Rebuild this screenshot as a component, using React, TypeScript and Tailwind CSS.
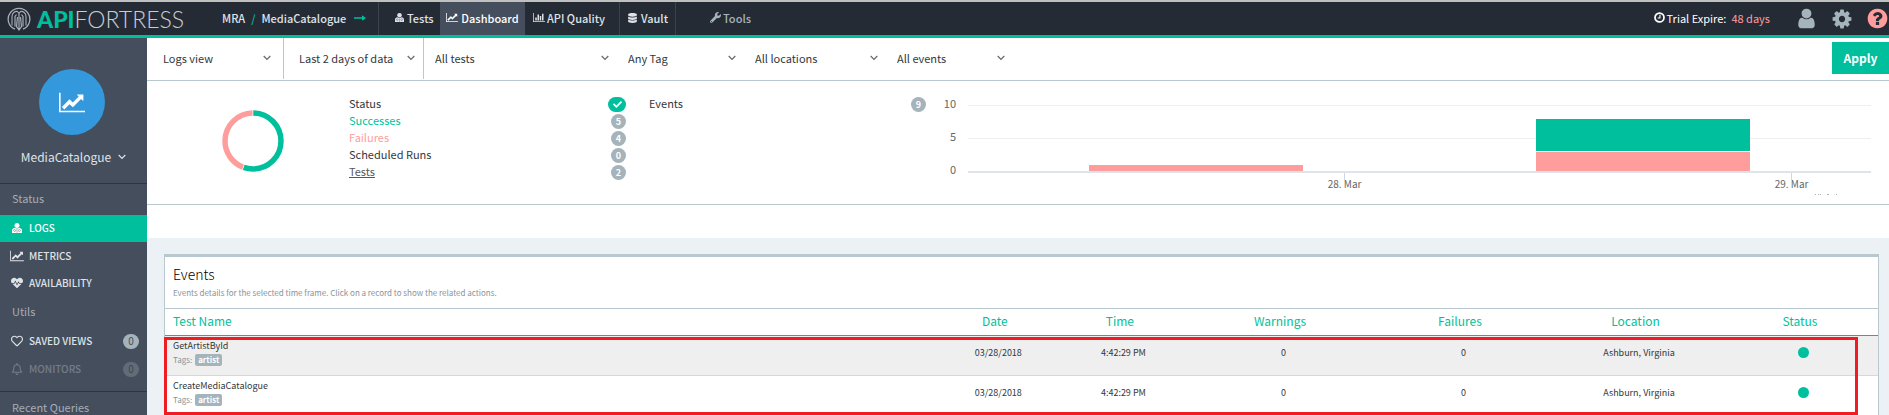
import React from "react";
import { FaWrench, FaDatabase, FaHeartbeat, FaRegHeart, FaRegBell, FaCheck } from "react-icons/fa";

type IconProps = { className?: string };

const LineChart = ({ className }: IconProps) => (
  <svg viewBox="0 0 2048 1792" fill="currentColor" className={className} aria-hidden="true">
    <path d="M2048 1536v128h-2048v-1536h128v1408h1920zM1920 288v435q0 21-19.5 29.5t-35.5-7.5l-121-121-633 633q-10 10-23 10t-23-10l-233-233-416 416-192-192 585-585q10-10 23-10t23 10l233 233 464-464-121-121q-16-16-7.5-35.5t29.5-19.5h435q14 0 23 9t9 23z" />
  </svg>
);

const BarChart = ({ className }: IconProps) => (
  <svg viewBox="0 0 2048 1792" fill="currentColor" className={className} aria-hidden="true">
    <path d="M640 896v512h-256v-512h256zM1024 384v1024h-256v-1024h256zM2048 1536v128h-2048v-1536h128v1408h1920zM1408 640v768h-256v-768h256zM1792 256v1152h-256v-1152h256z" />
  </svg>
);

const ChevronDown = ({ className }: IconProps) => (
  <svg viewBox="0 0 8 6" fill="none" stroke="currentColor" strokeWidth="1.200" className={className} aria-hidden="true">
    <path d="M0.700 1l3.300 3.300L7.300 1" />
  </svg>
);

const Tester = ({ className }: IconProps) => (
  <svg viewBox="0 0 20 20" className={className} aria-hidden="true">
    <g fill="currentColor">
      <path d="M10 0c3.200 0 5 2 5 5 0 2.800-2 5-5 5S5 7.800 5 5c0-3 1.800-5 5-5z" />
      <path d="M5.500 9.500c2.500 2 6.500 2 9 0 3.500.8 5.500 2.500 5.500 5.500v5H0v-5c0-3 2-4.700 5.500-5.500z" />
    </g>
    <g className="fill-none stroke-[#252b35]/50" strokeWidth="1.400">
      <circle cx="5.200" cy="15" r="2" />
      <circle cx="14.800" cy="15" r="2" />
      <path d="M10 12v7.500" />
    </g>
  </svg>
);

const Gear = ({ className }: IconProps) => (
  <svg viewBox="0 0 1792 1792" fill="currentColor" className={className} aria-hidden="true">
    <path d="M1152 896q0-106-75-181t-181-75-181 75-75 181 75 181 181 75 181-75 75-181zm512-109v222q0 12-8 23t-20 13l-185 28q-19 54-39 91 35 50 107 138 10 12 10 25t-9 23q-27 37-99 108t-94 71q-12 0-26-9l-138-108q-44 23-91 38-16 136-29 186-7 28-36 28h-222q-14 0-24.5-8.5t-11.500-21.500l-28-184q-49-16-90-37l-141 107q-10 9-25 9-14 0-25-11-126-114-165-168-7-10-7-23 0-12 8-23 15-21 51-66.500t54-70.500q-27-50-41-99l-183-27q-13-2-21-12.500t-8-23.500v-222q0-12 8-23t19-13l186-28q14-46 39-92-40-57-107-138-10-12-10-24 0-10 9-23 26-36 98.500-107.500t94.500-71.500q13 0 26 10l138 107q44-23 91-38 16-136 29-186 7-28 36-28h222q14 0 24.500 8.500t11.500 21.500l28 184q49 16 90 37l142-107q9-9 24-9 13 0 25 10 129 119 165 170 7 8 7 22 0 12-8 23-15 21-51 66.500t-54 70.500q26 50 41 98l183 28q13 2 21 12.500t8 23.500z" />
  </svg>
);

const User = ({ className }: IconProps) => (
  <svg viewBox="0 0 1792 1792" fill="currentColor" className={className} aria-hidden="true">
    <path d="M1536 1399q0 109-62.500 187t-150.500 78h-854q-88 0-150.500-78t-62.500-187q0-85 8.500-160.500t31.500-152 58.500-131 94-89 134.500-34.500q131 128 313 128t313-128q76 0 134.500 34.500t94 89 58.500 131 31.500 152 8.500 160.500zm-256-887q0 159-112.500 271.500t-271.500 112.500-271.500-112.500-112.500-271.500 112.500-271.500 271.500-112.500 271.500 112.500 112.500 271.500z" />
  </svg>
);

const Question = ({ className }: IconProps) => (
  <svg viewBox="0 0 1792 1792" fill="currentColor" className={className} aria-hidden="true">
    <path d="M1024 1376v-192q0-14-9-23t-23-9h-192q-14 0-23 9t-9 23v192q0 14 9 23t23 9h192q14 0 23-9t9-23zm256-672q0-88-55.500-163t-138.500-116-170-41q-243 0-371 213-15 24 8 42l132 100q7 6 19 6 16 0 25-12 53-68 86-92 34-24 86-24 48 0 85.500 26t37.500 59q0 38-20 61t-68 45q-63 28-115.500 86.500t-52.500 125.500v36q0 14 9 23t23 9h192q14 0 23-9t9-23q0-19 21.500-49.500t54.500-49.500q32-18 49-28.500t46-35 44.500-48 28-60.500 12.500-81zm384 192q0 209-103 385.500t-279.500 279.500-385.500 103-385.500-103-279.500-279.500-103-385.500 103-385.500 279.500-279.500 385.500-103 385.500 103 279.500 279.500 103 385.500z" />
  </svg>
);

const Clock = ({ className }: IconProps) => (
  <svg viewBox="0 0 12 12" className={className} fill="none" stroke="currentColor" aria-hidden="true">
    <circle cx="6" cy="6" r="4.900" strokeWidth="1.900" />
    <path d="M6.500 3v3.500H4" strokeWidth="1.200" />
  </svg>
);

const LogoMark = ({ className }: IconProps) => (
  <svg viewBox="0 0 24 24" className={className} fill="none" stroke="#a9adb8" aria-hidden="true">
    <path d="M8 22.200A10.800 10.800 0 1 1 16 22.200" strokeWidth="1.300" />
    <path d="M5 18.500V9.500C5 6 8 4 10.500 4.500l1.500 2 1.500-2C16 4 19 6 19 9.500v9" strokeWidth="1.100" />
    <path d="M8 19.500V9.500l1.500-2M16 19.500V9.500l-1.500-2M10.500 10l-1 9.500 2.500 3.500 2.500-3.500-1-9.500M12 7v15" strokeWidth="1.200" />
  </svg>
);

const views: [string, string, string, string][] = [
  ["Logs view", "w-[137px] pl-4 pr-[12px] border-r", "view", "Choose view"],
  ["Last 2 days of data", "w-[140px] pl-[15px] pr-[8px] border-r", "range", "Time range"],
  ["All tests", "w-[193px] pl-[11px] pr-[8px]", "tests", "Tests"],
  ["Any Tag", "w-[127px] pl-[11px] pr-[8px]", "tag", "Tag"],
  ["All locations", "w-[142px] pl-[11px] pr-[8px]", "location", "Location"],
  ["All events", "w-[127px] pl-[11px] pr-[8px]", "events", "Events"],
];

const stats: [string, string, string][] = [
  ["Successes", "5", "text-[#00bf9c]"],
  ["Failures", "4", "text-[#ff9d9d]"],
  ["Scheduled Runs", "0", "text-[#33373d]"],
  ["Tests", "2", "text-[#55585c] underline"],
];

const Count = ({ children }: { children: React.ReactNode }) => (
  <span className="flex h-[15px] w-[15px] items-center justify-center rounded-full bg-[#a5b3bb] text-[9px] font-bold text-white">{children}</span>
);

const rows = ["GetArtistById", "CreateMediaCatalogue"];

const navText = "pb-[2px]";
const sideLink = "flex items-center gap-[5px] pl-[10px] pr-2 text-[10px] font-medium";

export default function App() {
  return (
    <div className="min-h-screen overflow-hidden bg-[#ecf1f5] font-['Noto_Sans_CJK_SC','Noto_Sans',sans-serif] text-[11px] leading-[16px] text-[#33373d]">
      <header className="flex h-[38px] items-center border-t-2 border-b-3 border-t-[#c0c0c0] border-b-[#00bf9c] bg-[#252b35] font-medium text-[#dfe3e8]">
        <a href="#home" className="ml-[7px] flex w-[215px] items-center gap-[6px]" aria-label="API Fortress">
          <LogoMark className="h-6 w-6" />
          <span className="font-['Lato',sans-serif] text-[23px] leading-[24px] text-[#c9cdd6]">
            <b className="font-black text-[#00bf9c]">API</b>
            <span className="font-light">FORTRESS</span>
          </span>
        </a>
        <a href="#project" className={`flex w-[156px] items-center gap-[6px] ${navText}`}>
          <span>MRA</span>
          <span className="text-[#00bf9c]">/</span>
          <span>MediaCatalogue</span>
          <svg viewBox="0 0 12 6" className="ml-[2px] h-[6px] w-3 shrink-0" fill="#00bf9c" aria-hidden="true">
            <path d="M0 2.300h8V.3L12 3 8 5.700v-2H0z" />
          </svg>
        </a>
        <nav className="flex h-full flex-1 items-stretch">
          <a href="#tests" className={`flex w-[62px] items-center gap-[3px] border-l border-[#3d434d] pl-4 ${navText}`}><Tester className="h-[9px] w-[9px]" />Tests</a>
          <a href="#dashboard" className={`flex w-[85px] items-center justify-center gap-[3px] bg-[#454e5d] text-white ${navText}`}><LineChart className="h-[11px] w-3" />Dashboard</a>
          <a href="#quality" className={`flex w-[95px] items-center gap-[2px] border-r border-[#3d434d] pl-2 ${navText}`}><BarChart className="h-[11px] w-3" />API Quality</a>
          <a href="#vault" className={`flex w-14 items-center gap-[4px] border-r border-[#3d434d] pl-2 ${navText}`}><FaDatabase className="h-[10px] w-[9px]" />Vault</a>
          <a href="#tools" className={`ml-[34px] flex items-center gap-[2px] text-[#a5b3bb] ${navText}`}><FaWrench className="h-[11px] w-[11px]" />Tools</a>
        </nav>
        <div className={`flex items-center gap-[2px] font-normal text-white ${navText}`}>
          <Clock className="h-[11px] w-[11px]" />Trial Expire:<span className="ml-[3px] text-[#ff9d9d]">48 days</span>
        </div>
        <button className="ml-[25px] text-[#a5b3bb]" aria-label="Account"><User className="h-[23px] w-[23px]" /></button>
        <button className="ml-[13px] text-[#a5b3bb]" aria-label="Settings"><Gear className="h-[22px] w-[22px]" /></button>
        <button className="ml-[13px] text-[#ff9d9d]" aria-label="Help"><Question className="h-[23px] w-[23px]" /></button>
      </header>

      <div className="flex items-stretch">
        <aside className="w-[147px] shrink-0 bg-[#454e5d] text-[#dfe3e8]">
          <div className="flex flex-col items-center border-b border-[#2e3542] pt-[31px] pb-[18px]">
            <span className="mr-[3px] flex h-[66px] w-[66px] items-center justify-center rounded-full bg-[#3398dc] text-white"><LineChart className="h-[23px] w-[26px]" /></span>
            <button className="mt-[14px] flex items-center gap-[7px] text-[12px] leading-[16px]">MediaCatalogue<ChevronDown className="h-[6px] w-2" /></button>
          </div>
          <h2 className="flex h-[31px] items-center pb-[3px] pl-3 text-[#a5adb8]">Status</h2>
          <nav>
            <a href="#logs" className={`${sideLink} h-[27px] bg-[#00bf9c] pb-px text-white`}><span className="flex w-[14px] justify-center"><Tester className="h-[10px] w-[10px]" /></span>LOGS</a>
            <a href="#metrics" className={`${sideLink} h-[27px]`}><span className="flex w-[14px] justify-center"><LineChart className="h-3 w-[14px]" /></span>METRICS</a>
            <a href="#availability" className={`${sideLink} h-[27px]`}><span className="flex w-[14px] justify-center"><FaHeartbeat className="h-3 w-3" /></span>AVAILABILITY</a>
          </nav>
          <h2 className="flex h-[31px] items-center pb-[2px] pl-3 text-[#a5adb8]">Utils</h2>
          <nav>
            <a href="#views" className={`${sideLink} h-7`}><span className="flex w-[14px] justify-center"><FaRegHeart className="h-3 w-3" /></span><span className="flex-1">SAVED VIEWS</span><span className="flex h-[15px] w-4 items-center justify-center rounded-full bg-[#a5b3bb] font-normal text-[#454e5d]">0</span></a>
            <a href="#monitors" className={`${sideLink} h-7 opacity-30`}><span className="flex w-[14px] justify-center"><FaRegBell className="h-3 w-3" /></span><span className="flex-1">MONITORS</span><span className="flex h-[15px] w-4 items-center justify-center rounded-full bg-[#a5b3bb] font-normal text-[#252b35]">0</span></a>
          </nav>
          <h2 className="mt-[8px] flex h-8 items-center border-t border-[#2e3542] pb-[2px] pl-3 text-[#a5adb8]">Recent Queries</h2>
        </aside>

        <main className="min-w-0 flex-1">
          <form className="flex h-[43px] items-start border-b border-[#b9c7cf] bg-white" onSubmit={(e) => e.preventDefault()}>
            {views.map(([text, box, id, label]) => (
              <div key={id} className={`flex h-[41px] shrink-0 items-center border-[#b9c7cf] pb-[2px] ${box}`}>
                <select id={id} aria-label={label} className="h-8 min-w-0 flex-1 appearance-none bg-transparent leading-[20px]">
                  <option>{text}</option>
                </select>
                <ChevronDown className="pointer-events-none h-[6px] w-2 shrink-0 text-[#666]" />
              </div>
            ))}
            <button className="mt-1 ml-auto h-8 w-[57px] bg-[#00bf9c] text-[12px] font-bold text-white">Apply</button>
          </form>

          <section className="flex h-[124px] border-b border-[#b9c7cf] bg-white">
            <svg viewBox="0 0 62 62" className="mt-[29px] ml-[75px] h-[62px] w-[62px] shrink-0 -rotate-90" fill="none" strokeWidth="5.500" aria-hidden="true">
              <circle cx="31" cy="31" r="28" stroke="#00bf9c" pathLength="360" strokeDasharray="199 161" strokeDashoffset="-0.500" />
              <circle cx="31" cy="31" r="28" stroke="#ff9d9d" pathLength="360" strokeDasharray="158 202" strokeDashoffset="-201" />
            </svg>
            <dl className="mt-[15px] ml-[65px] w-[277px] shrink-0 [&_dt]:pb-[3px]">
              <div className="flex h-[17px] items-center justify-between"><dt>Status</dt><dd className="flex h-[15px] w-[18px] items-center justify-center rounded-full bg-[#00bf9c] text-white"><FaCheck className="h-[9px] w-[9px]" /></dd></div>
              {stats.map(([name, n, tone]) => (
                <div key={name} className="flex h-[17px] items-center justify-between"><dt className={tone}>{name}</dt><dd><Count>{n}</Count></dd></div>
              ))}
            </dl>
            <div className="mt-[15px] ml-[23px] flex h-[17px] w-[277px] shrink-0 items-center justify-between"><span className="pb-[3px]">Events</span><Count>9</Count></div>
            <div className="mt-[14px] ml-[10px] flex w-5 shrink-0 flex-col items-end gap-[17px] text-[#666]"><span>10</span><span>5</span><span>0</span></div>
            <div className="mt-6 mr-[18px] ml-3 flex-1">
              <div className="flex h-[68px] flex-col border-t border-b-2 border-t-[#eeeeee] border-b-[#dfe4ec]">
                <div className="h-[33px] shrink-0 border-b border-[#eeeeee]" />
                <div className="-mt-5 grid h-[52px] shrink-0 grid-cols-[13.4%_23.7%_25.8%_23.7%_13.4%] items-end">
                  <span />
                  <span className="h-[6px] bg-[#ff9d9d]" />
                  <span />
                  <span className="flex flex-col gap-px bg-white"><span className="h-8 bg-[#00bf9c]" /><span className="h-[19px] bg-[#ff9d9d]" /></span>
                </div>
              </div>
              <div className="grid grid-cols-[34.5%_14.4%_34.9%_14.800%] text-center text-[10px] leading-[14px] text-[#666]">
                <span />
                <span><i className="mx-auto -mb-[3px] block h-[7px] w-px bg-[#ccd6eb]" />28. Mar</span>
                <span />
                <span><i className="mx-auto -mb-[3px] block h-[7px] w-px bg-[#ccd6eb]" />29. Mar</span>
              </div>
              <svg viewBox="0 0 24 1" className="mt-[3px] mr-[33px] ml-auto h-px w-6" fill="#b0b0b0" aria-hidden="true">
                <path d="M1 0h1v1H1zM4 0h1v1H4zM6 0h1v1H6zM13 0h2v1h-2zM22 0h1v1h-1z" />
              </svg>
            </div>
          </section>
          <div className="h-[33px] bg-white" />

          <section className="relative mt-4 mr-[10px] ml-[17px] border-x border-t-3 border-[#b9c7cf] bg-white">
            <div className="h-[52px] border-b border-[#b9c7cf] pt-[7px] pl-2">
              <h1 className="text-[14px] leading-5 font-light text-black">Events</h1>
              <p className="text-[8px] leading-[18px] text-[#87939b]">Events details for the selected time frame. Click on a record to show the related actions.</p>
            </div>
            <table className="w-full table-fixed border-collapse">
              <colgroup>
                <col className="w-[45.2%]" /><col className="w-[6.9%]" /><col className="w-[7.7%]" /><col className="w-[11%]" /><col className="w-[10%]" /><col className="w-[10.5%]" /><col />
              </colgroup>
              <thead className="text-[12px] text-[#00bf9c]">
                <tr className="h-[26px] border-b border-[#00bf9c] [&>th]:pr-[7px] [&>th]:pb-[2px] [&>th]:font-normal">
                  <th className="pl-2 text-left">Test Name</th>
                  <th>Date</th><th>Time</th><th>Warnings</th><th>Failures</th><th>Location</th><th>Status</th>
                </tr>
              </thead>
              <tbody className="text-[9px] leading-[14px]">
                {rows.map((name) => (
                  <tr key={name} className="h-10 border-b border-[#d5d9dc] text-center odd:bg-[#efefef] [&>td]:pb-[5px]">
                    <td className="pl-2 text-left">
                      <div>{name}</div>
                      <div className="flex items-center gap-[3px] text-[8px] text-[#87939b]">Tags: <span className="rounded-xs bg-[#a5b3bb] px-[3px] leading-[12px] font-bold text-white">artist</span></div>
                    </td>
                    <td>03/28/2018</td><td>4:42:29 PM</td><td>0</td><td>0</td><td>Ashburn, Virginia</td>
                    <td><span className="mx-auto block h-[11px] w-[11px] rounded-full bg-[#00bf9c]" /></td>
                  </tr>
                ))}
              </tbody>
            </table>
            <div className="pointer-events-none absolute -left-px right-[20px] bottom-px h-[78px] border-3 border-[#ef1c24]" />
          </section>
        </main>
      </div>
    </div>
  );
}
